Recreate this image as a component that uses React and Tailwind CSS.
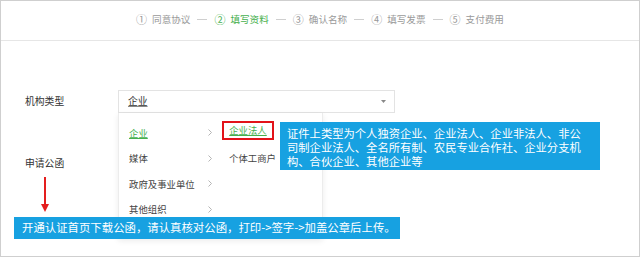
import React from "react";

const steps = [
  { no: "①", label: "同意协议" },
  { no: "②", label: "填写资料", active: true },
  { no: "③", label: "确认名称" },
  { no: "④", label: "填写发票" },
  { no: "⑤", label: "支付费用" },
];

const orgTypes = [
  { name: "企业", active: true },
  { name: "媒体" },
  { name: "政府及事业单位" },
  { name: "其他组织" },
];

function Chevron() {
  return (
    <svg width="4" height="7" viewBox="0 0 4 7" className="shrink-0">
      <path d="M0.5 0.5 L3.5 3.5 L0.5 6.5" fill="none" stroke="#b5b5b5" strokeWidth="1" />
    </svg>
  );
}

export default function App() {
  return (
    <div className="w-[640px] h-[257px] bg-white border border-[#cfcfcf] relative overflow-hidden font-['Noto_Sans_CJK_SC',sans-serif] text-[#333]">
      {/* Steps */}
      <div className="h-[40px] border-b border-[#e6e6e6] flex items-center justify-center gap-[6px] text-[9.6px] text-[#9a9a9a] pb-[2px]">
        {steps.map((s, i) => (
          <React.Fragment key={s.no}>
            {i > 0 && <span className="w-[10px] h-px bg-[#cfcfcf] mx-[1px]" />}
            <span className={`flex items-center gap-[5px] ${s.active ? "text-[#46b04e]" : ""}`}>
              <span className="text-[11px]">{s.no}</span>
              <span>{s.label}</span>
            </span>
          </React.Fragment>
        ))}
      </div>

      {/* Form */}
      <div className="pl-[24px] text-[9.8px]">
        <div className="mt-[49px] flex items-center">
          <span className="w-[93px]">机构类型</span>
          <div className="w-[277px] h-[23px] border border-[#e3e3e3] flex items-center justify-between pl-[9px] pr-[8px]">
            <span className="underline decoration-[#888]">企业</span>
            <svg width="5" height="3" viewBox="0 0 5 3">
              <path d="M0 0 H5 L2.5 3 Z" fill="#888" />
            </svg>
          </div>
        </div>
        <div className="mt-[40px] h-[20px] flex items-center">
          <span>申请公函</span>
        </div>
      </div>

      {/* Cascader dropdown */}
      <div className="absolute left-[117px] top-[112px] w-[205px] h-[126px] bg-white border-l border-r border-[#ececec] shadow-[0_2px_6px_rgba(0,0,0,0.08)] flex text-[9.4px]">
        <div className="w-[103px] pt-[7px] pl-[10px] pr-[10px]">
          {orgTypes.map((t) => (
            <div key={t.name} className="h-[25.5px] flex items-center justify-between">
              <span className={t.active ? "text-[#46b04e] underline" : "text-[#444]"}>{t.name}</span>
              <Chevron />
            </div>
          ))}
        </div>
        <div className="pt-[8px]">
          <div className="w-[52px] h-[19px] border-2 border-[#e2131a] flex items-center justify-center text-[#46b04e] underline">
            企业法人
          </div>
          <div className="mt-[8px] h-[20px] pl-[7px] flex items-center text-[#444]">个体工商户</div>
        </div>
      </div>

      {/* Tooltip annotation */}
      <div className="absolute left-[279px] top-[121px] w-[320px] h-[48px] bg-[#17a1e1] text-white text-[11.3px] leading-[14px] pl-[7px] pt-[4px]">
        证件上类型为个人独资企业、企业法人、企业非法人、非公
        <br />
        司制企业法人、全名所有制、农民专业合作社、企业分支机
        <br />
        构、合伙企业、其他企业等
      </div>

      {/* Red arrow */}
      <svg className="absolute left-[39px] top-[176px]" width="10" height="36" viewBox="0 0 10 36">
        <line x1="5" y1="0" x2="5" y2="28" stroke="#e41e1e" strokeWidth="2" />
        <path d="M1 27 H9 L5 35 Z" fill="#e41e1e" />
      </svg>

      {/* Bottom annotation */}
      <div className="absolute left-[13px] top-[216px] w-[386px] h-[22px] bg-[#17a1e1] text-white text-[11.4px] pl-[8px] flex items-center">
        开通认证首页下载公函，请认真核对公函，打印-&gt;签字-&gt;加盖公章后上传。
      </div>
    </div>
  );
}
